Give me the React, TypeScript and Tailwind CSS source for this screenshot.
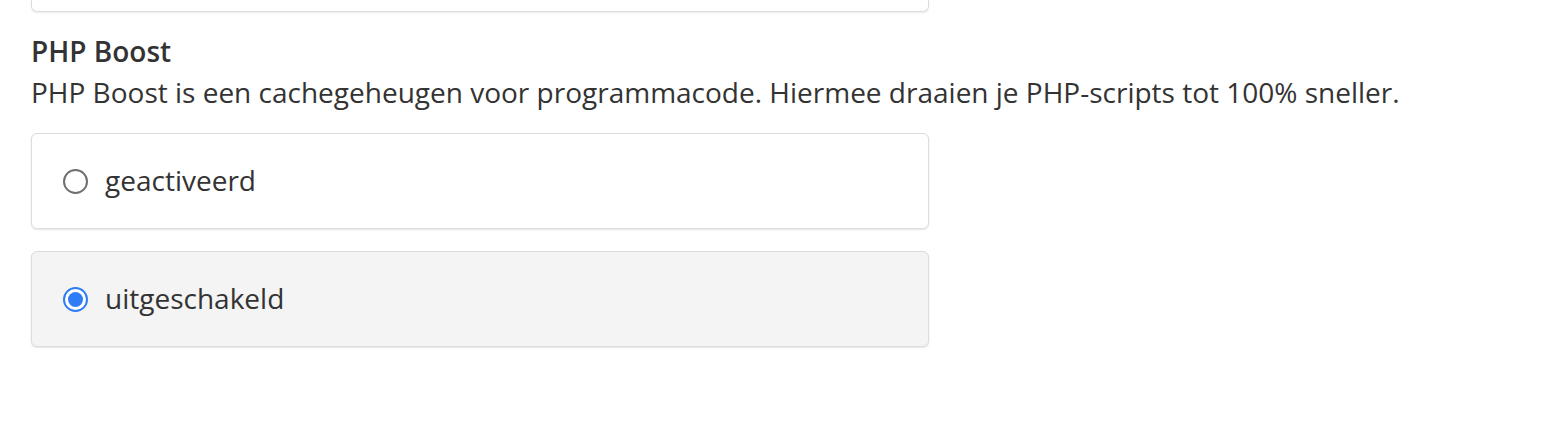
import { useState } from "react";

const options = [
  { key: "on", label: "geactiveerd" },
  { key: "off", label: "uitgeschakeld" },
];

const App = () => {
  const [selected, setSelected] = useState("off");

  return (
    <div className="min-h-[428px] w-[1546px] bg-white font-['Open_Sans',sans-serif] text-[#333]">
      <div className="pl-[31px] w-[929px]">
        {/* bottom of the previous card */}
        <div className="h-[12px] rounded-b-[6px] border border-t-0 border-[#dcdcdc] shadow-[0_1px_2px_rgba(0,0,0,0.08)]" />

        <h2 className="mt-[21px] text-[28px] leading-[36px] font-semibold">PHP Boost</h2>
        <p className="mt-[5px] text-[28px] leading-[36px] whitespace-nowrap">
          PHP Boost is een cachegeheugen voor programmacode. Hiermee draaien je PHP-scripts tot 100% sneller.
        </p>

        <div className="mt-[23px] flex flex-col gap-[22px]">
          {options.map((o) => {
            const active = selected === o.key;
            return (
              <label
                key={o.key}
                onClick={() => setSelected(o.key)}
                className={`flex h-[96px] cursor-pointer items-center rounded-[6px] border border-[#dcdcdc] pl-[31px] shadow-[0_1px_2px_rgba(0,0,0,0.1)] ${
                  active ? "bg-[#f4f4f4]" : "bg-white"
                }`}
              >
                {active ? (
                  <span className="flex h-[25px] w-[25px] items-center justify-center rounded-full border-[2px] border-[#2e7cf6] bg-white">
                    <span className="h-[15px] w-[15px] rounded-full bg-[#2e7cf6]" />
                  </span>
                ) : (
                  <span className="h-[25px] w-[25px] rounded-full border-[2px] border-[#6f6f6f] bg-white" />
                )}
                <span className="ml-[17px] -mt-[3px] text-[28px] leading-[36px]">{o.label}</span>
              </label>
            );
          })}
        </div>
      </div>
    </div>
  );
};

export default App;
